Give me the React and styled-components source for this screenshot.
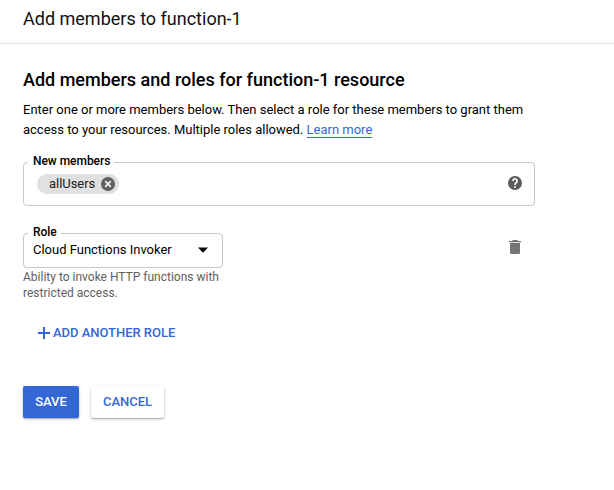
import React from 'react';
import styled, { createGlobalStyle, css } from 'styled-components';

const GlobalStyle = createGlobalStyle`
  * { box-sizing: border-box; }
  body {
    margin: 0;
    background: #fff;
    color: #000;
    font-family: Roboto, "Liberation Sans", sans-serif;
    font-size: 13px;
  }
`;

const Page = styled.div`
  width: 100%;
  min-height: 490px;
`;

const Header = styled.header`
  height: 44px;
  padding: 7px 23px 0;
  border-bottom: 1px solid #e0e0e0;
`;

const Title = styled.h1`
  margin: 0;
  color: #111;
  font-size: 18px;
  font-weight: 400;
  line-height: 24px;
  white-space: nowrap;
`;

const Content = styled.main`
  display: flex;
  flex-direction: column;
  align-items: flex-start;
  width: 535px;
  padding: 24px 0 0 23px;
`;

const Heading = styled.h2`
  margin: 0;
  font-size: 18px;
  font-weight: 500;
  line-height: 24px;
  white-space: nowrap;
`;

const Description = styled.p`
  margin: 8px 0 0;
  letter-spacing: -0.006px;
  line-height: 20px;
  white-space: nowrap;
`;

const Link = styled.a`
  display: inline-block;
  height: 18px;
  line-height: 20px;
  color: #3367d6;
  text-decoration: none;
  border-bottom: 1px solid #3367d6;
`;

const Field = styled.div`
  position: relative;
  display: flex;
  align-items: center;
  justify-content: space-between;
  width: ${(p) => p.$width}px;
  height: ${(p) => p.$height}px;
  padding: ${(p) => p.$padding};
  border: 1px solid #c8c8c8;
  border-radius: 4px;
`;

const FieldLabel = styled.label`
  position: absolute;
  top: -9px;
  left: 4px;
  padding: 0 4px 0 5px;
  background: #fff;
  font-size: 12px;
  font-weight: 500;
  letter-spacing: -0.04px;
  line-height: 15px;
  white-space: nowrap;
`;

const Chip = styled.span`
  display: flex;
  align-items: center;
  justify-content: space-between;
  width: 82px;
  height: 20px;
  padding: 0 4px 0 12px;
  border-radius: 10px;
  background: #e0e0e0;
  color: #212121;
  letter-spacing: -0.04px;
  line-height: 20px;
`;

const SelectValue = styled.span`
  padding-bottom: 2px;
  letter-spacing: -0.01px;
`;

const Icon = styled.svg`
  display: block;
  flex: none;
  width: ${(p) => p.$size}px;
  height: ${(p) => p.$size}px;
  fill: ${(p) => p.$color || 'currentColor'};
`;

const Members = styled.section`
  margin-top: 22px;
`;

const RoleRow = styled.section`
  display: flex;
  align-items: flex-start;
  justify-content: space-between;
  width: 512px;
  margin-top: 27px;
`;

const RoleColumn = styled.div`
  width: 200px;
`;

const Hint = styled.p`
  margin: 1px 0 0;
  color: #616161;
  font-size: 12px;
  line-height: 16px;
  white-space: nowrap;
`;

const DeleteButton = styled.button`
  margin: 5px 11px 0 0;
  padding: 0;
  border: 0;
  background: none;
`;

const button = css`
  display: flex;
  align-items: center;
  justify-content: center;
  height: 32px;
  padding: 0;
  border: 0;
  border-radius: 2px;
  font: 500 13px/32px Roboto, "Liberation Sans", sans-serif;
  letter-spacing: -0.03px;
  white-space: nowrap;
`;

const AddButton = styled.button`
  ${button}
  margin: 16px 0 0 12px;
  background: none;
  color: #3367d6;
`;

const Actions = styled.footer`
  display: flex;
  gap: 12px;
  margin-top: 37px;
`;

const ActionButton = styled.button`
  ${button}
  width: ${(p) => p.$width}px;
  background: ${(p) => (p.$primary ? '#3367d6' : '#fff')};
  color: ${(p) => (p.$primary ? '#fff' : '#3367d6')};
  box-shadow: 0 1px 3px rgba(0, 0, 0, 0.24), 0 1px 1px rgba(0, 0, 0, 0.18);
`;

const HelpIcon = styled(Icon)`
  margin-bottom: 2px;
`;

export default function App() {
  return (
    <Page>
      <GlobalStyle />
      <Header>
        <Title>Add members to function-1</Title>
      </Header>
      <Content>
        <Heading>Add members and roles for function-1 resource</Heading>
        <Description>
          Enter one or more members below. Then select a role for these members to grant them
          <br />
          access to your resources. Multiple roles allowed. <Link>Learn more</Link>
        </Description>
        <Members>
          <Field $width={512} $height={44} $padding="0 12px 0 13px">
            <FieldLabel>New members</FieldLabel>
            <Chip>
              <span>allUsers</span>
              <Icon viewBox="0 0 14 14" $size={14} $color="#616161">
                <circle cx="7" cy="7" r="7" />
                <path d="M4.200 4.200l5.600 5.600m0-5.600l-5.600 5.600" stroke="#eee" strokeWidth="1.900" />
              </Icon>
            </Chip>
            <HelpIcon viewBox="2 2 20 20" $size={14} $color="#5c5c5c">
              <circle cx="12" cy="12" r="10" />
              <path
                d="M9 9a3 3 0 1 1 5.100 2.100L13 12.200Q12 13.200 12 15M12 16.800v2.400"
                fill="none"
                stroke="#fff"
                strokeWidth="2.400"
              />
            </HelpIcon>
          </Field>
        </Members>
        <RoleRow>
          <RoleColumn>
            <Field $width={200} $height={35} $padding="0 14px 0 9px">
              <FieldLabel>Role</FieldLabel>
              <SelectValue>Cloud Functions Invoker</SelectValue>
              <Icon viewBox="0 0 10 10" $size={10}><path d="M0 1.500h10l-5 5.300z" /></Icon>
            </Field>
            <Hint>
              Ability to invoke HTTP functions with
              <br />
              restricted access.
            </Hint>
          </RoleColumn>
          <DeleteButton aria-label="Delete role">
            <Icon viewBox="0 0 18 18" $size={18} $color="#757575">
              <path d="M4 5h10v9.500a1.500 1.500 0 0 1-1.500 1.500h-7A1.500 1.500 0 0 1 4 14.500zM3 3h3l1-1h4l1 1h3v1.300H3z" />
            </Icon>
          </DeleteButton>
        </RoleRow>
        <AddButton>
          <Icon viewBox="0 0 18 18" $size={18}><path d="M8 3h2v5h5v2h-5v5H8v-5H3V8h5z" /></Icon>
          ADD ANOTHER ROLE
        </AddButton>
        <Actions>
          <ActionButton $primary $width={56}>SAVE</ActionButton>
          <ActionButton $width={73}>CANCEL</ActionButton>
        </Actions>
      </Content>
    </Page>
  );
}
